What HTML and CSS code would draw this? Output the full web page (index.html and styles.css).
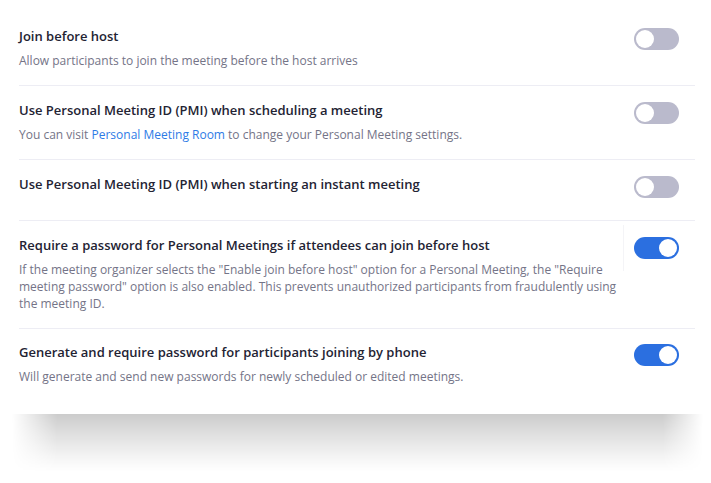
FILE: index.html
```html
<!DOCTYPE html>
<html lang="en">
<head>
    <meta charset="UTF-8">
    <meta name="viewport" content="width=device-width, initial-scale=1.0">
    <title>Meeting Settings</title>
    <link rel="stylesheet" href="styles.css">
</head>
<body>
    <div class="card">
        <div class="setting">
            <div class="setting-text">
                <div class="setting-title">Join before host</div>
                <div class="setting-desc">Allow participants to join the meeting before the host arrives</div>
            </div>
            <div class="toggle-cell">
                <span class="toggle"></span>
            </div>
        </div>

        <div class="setting">
            <div class="setting-text">
                <div class="setting-title">Use Personal Meeting ID (PMI) when scheduling a meeting</div>
                <div class="setting-desc">You can visit <a href="#">Personal Meeting Room</a> to change your Personal Meeting settings.</div>
            </div>
            <div class="toggle-cell">
                <span class="toggle"></span>
            </div>
        </div>

        <div class="setting short">
            <div class="setting-text">
                <div class="setting-title">Use Personal Meeting ID (PMI) when starting an instant meeting</div>
            </div>
            <div class="toggle-cell">
                <span class="toggle"></span>
            </div>
        </div>

        <div class="setting">
            <div class="setting-text">
                <div class="setting-title">Require a password for Personal Meetings if attendees can join before host</div>
                <div class="setting-desc">If the meeting organizer selects the "Enable join before host" option for a Personal Meeting, the "Require meeting password" option is also enabled. This prevents unauthorized participants from fraudulently using the meeting ID.</div>
            </div>
            <div class="toggle-cell divided">
                <span class="toggle on"></span>
            </div>
        </div>

        <div class="setting last">
            <div class="setting-text">
                <div class="setting-title">Generate and require password for participants joining by phone</div>
                <div class="setting-desc">Will generate and send new passwords for newly scheduled or edited meetings.</div>
            </div>
            <div class="toggle-cell">
                <span class="toggle on"></span>
            </div>
        </div>
    </div>
    <div class="card-shadow"></div>
</body>
</html>
```

FILE: styles.css
```css
body {
    font-family: "Open Sans", Arial, sans-serif;
    margin: 0;
    background-color: #fff;
}
.card {
    background: #fff;
    padding: 12px 16px 0 19px;
    height: 414px;
    box-sizing: border-box;
}
.card-shadow {
    height: 58px;
    margin: 0 8px 0 12px;
    background: linear-gradient(to bottom, rgba(0, 0, 0, 0.2), rgba(0, 0, 0, 0.1) 45%, rgba(0, 0, 0, 0.03) 80%, rgba(0, 0, 0, 0));
    -webkit-mask-image: linear-gradient(to right, transparent, #000 45px, #000 calc(100% - 40px), transparent);
    mask-image: linear-gradient(to right, transparent, #000 45px, #000 calc(100% - 40px), transparent);
}
.setting {
    display: flex;
    align-items: flex-start;
    padding: 14px 0 16px;
    border-bottom: 1px solid #ededf4;
}
.setting.short {
    padding-bottom: 22px;
}
.setting.last {
    border-bottom: none;
    padding-top: 13px;
}
.setting-text {
    flex: 1;
}
.setting-title {
    font-size: 13px;
    line-height: 20px;
    font-weight: 600;
    color: #232333;
}
.setting-desc {
    margin-top: 6px;
    font-size: 12px;
    line-height: 17px;
    color: #747487;
}
.setting-desc a {
    color: #2e7be6;
    text-decoration: none;
}
.toggle-cell {
    width: 72px;
    box-sizing: border-box;
    padding: 2px 16px 0 11px;
}
.toggle-cell.divided {
    border-left: 1px solid #f4f4f7;
    height: 46px;
    margin-top: -10px;
    padding-top: 12px;
    padding-left: 10px;
}
.toggle {
    display: block;
    width: 45px;
    height: 22px;
    border-radius: 11px;
    background: #babacc;
    position: relative;
}
.toggle::after {
    content: "";
    position: absolute;
    top: 2px;
    left: 2px;
    width: 18px;
    height: 18px;
    border-radius: 50%;
    background: #fff;
}
.toggle.on {
    background: #2b6fe0;
}
.toggle.on::after {
    left: 25px;
}
```
